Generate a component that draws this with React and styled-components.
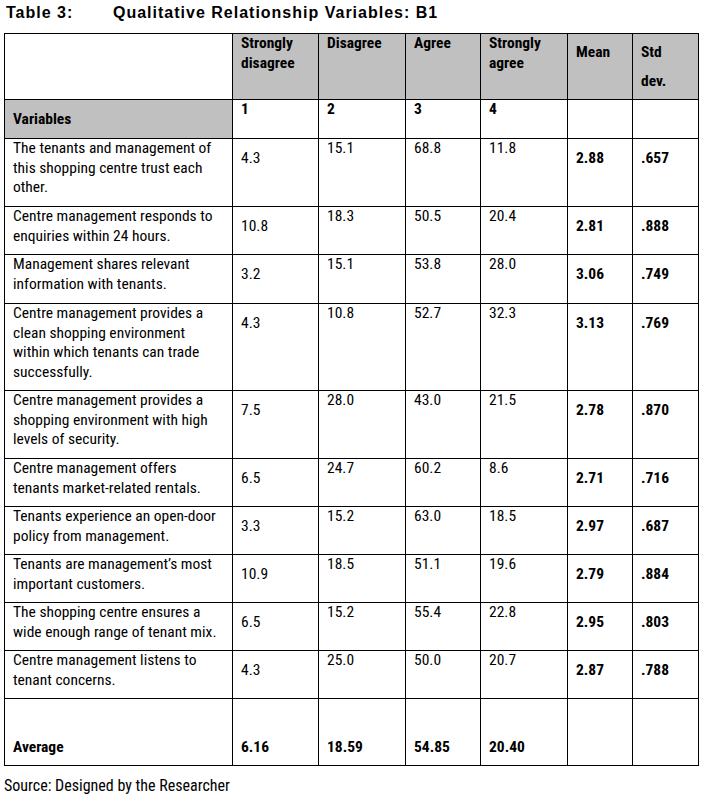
import React from 'react';
import styled, { createGlobalStyle } from 'styled-components';

const GlobalStyle = createGlobalStyle`
  body {
    margin: 0;
    background: #fff;
    color: #000;
    font-family: "Roboto Condensed", "Liberation Sans Narrow", "Arial Narrow", sans-serif;
  }
`;

const Page = styled.div`
  width: 708px;
  height: 799px;
  padding: 3px 0 0 4px;
  box-sizing: border-box;
`;

const Caption = styled.div`
  display: flex;
  font-family: "Liberation Sans", Arial, sans-serif;
  font-weight: bold;
  font-size: 16px;
  line-height: 20px;
  letter-spacing: 1px;
  color: #000;
  padding-left: 2px;
  height: 30px;
`;

const CaptionLabel = styled.span`
  width: 107px;
`;

const Table = styled.table`
  border-collapse: collapse;
  table-layout: fixed;
  width: 695px;
  font-size: 15.5px;
  line-height: 19.5px;
`;

const Tr = styled.tr`
  height: ${p => p.$h}px;
`;

const Cell = styled.td`
  border: 1px solid #000;
  vertical-align: ${p => (p.$bottom ? 'bottom' : 'top')};
  padding: ${p => p.$pt || 0}px 8px ${p => (p.$bottom ? 8 : 0)}px 8px;
  background: ${p => (p.$shade ? '#c0c0c0' : '#fff')};
  font-weight: ${p => (p.$bold ? 'bold' : 'normal')};
  color: #000;
`;

const HeadLines = styled.div`
  line-height: ${p => p.$lh || 19.5}px;
`;

const Source = styled.div`
  margin-top: 10px;
  font-size: 16px;
  line-height: 19px;
  color: #000;
`;

const rows = [
  [['The tenants and management of', 'this shopping centre trust each', 'other.'], '4.3', '15.1', '68.8', '11.8', '2.88', '.657', 68],
  [['Centre management responds to', 'enquiries within 24 hours.'], '10.8', '18.3', '50.5', '20.4', '2.81', '.888', 48],
  [['Management shares relevant', 'information with tenants.'], '3.2', '15.1', '53.8', '28.0', '3.06', '.749', 49],
  [['Centre management provides a', 'clean shopping environment', 'within which tenants can trade', 'successfully.'], '4.3', '10.8', '52.7', '32.3', '3.13', '.769', 87],
  [['Centre management provides a', 'shopping environment with high', 'levels of security.'], '7.5', '28.0', '43.0', '21.5', '2.78', '.870', 68],
  [['Centre management offers', 'tenants market-related rentals.'], '6.5', '24.7', '60.2', '8.6', '2.71', '.716', 48],
  [['Tenants experience an open-door', 'policy from management.'], '3.3', '15.2', '63.0', '18.5', '2.97', '.687', 48],
  [['Tenants are management’s most', 'important customers.'], '10.9', '18.5', '51.1', '19.6', '2.79', '.884', 48],
  [['The shopping centre ensures a', 'wide enough range of tenant mix.'], '6.5', '15.2', '55.4', '22.8', '2.95', '.803', 48],
  [['Centre management listens to', 'tenant concerns.'], '4.3', '25.0', '50.0', '20.7', '2.87', '.788', 48],
];

const Lines = ({ lines }) =>
  lines.map((l, i) => (
    <React.Fragment key={i}>
      {i > 0 && <br />}
      {l}
    </React.Fragment>
  ));

export default function App() {
  return (
    <Page>
      <GlobalStyle />
      <Caption>
        <CaptionLabel>Table 3:</CaptionLabel>
        <span>Qualitative Relationship Variables: B1</span>
      </Caption>
      <Table>
        <colgroup>
          <col style={{ width: 228 }} />
          <col style={{ width: 86 }} />
          <col style={{ width: 87 }} />
          <col style={{ width: 75 }} />
          <col style={{ width: 87 }} />
          <col style={{ width: 65 }} />
          <col style={{ width: 66 }} />
        </colgroup>
        <tbody>
          <Tr $h={66}>
            <Cell />
            <Cell $shade $bold><Lines lines={['Strongly', 'disagree']} /></Cell>
            <Cell $shade $bold>Disagree</Cell>
            <Cell $shade $bold>Agree</Cell>
            <Cell $shade $bold><Lines lines={['Strongly', 'agree']} /></Cell>
            <Cell $shade $bold $pt={9}>Mean</Cell>
            <Cell $shade $bold $pt={4}><HeadLines $lh={29}>Std<br />dev.</HeadLines></Cell>
          </Tr>
          <Tr $h={39}>
            <Cell $shade $bold $pt={10}>Variables</Cell>
            <Cell $bold>1</Cell>
            <Cell $bold>2</Cell>
            <Cell $bold>3</Cell>
            <Cell $bold>4</Cell>
            <Cell />
            <Cell />
          </Tr>
          {rows.map(([lines, sd, d, a, sa, mean, std, h], i) => (
            <Tr key={i} $h={h}>
              <Cell><Lines lines={lines} /></Cell>
              <Cell $pt={10}>{sd}</Cell>
              <Cell>{d}</Cell>
              <Cell>{a}</Cell>
              <Cell>{sa}</Cell>
              <Cell $bold $pt={10}>{mean}</Cell>
              <Cell $bold $pt={10}>{std}</Cell>
            </Tr>
          ))}
          <Tr $h={67}>
            <Cell $bold $bottom>Average</Cell>
            <Cell $bold $bottom>6.16</Cell>
            <Cell $bold $bottom>18.59</Cell>
            <Cell $bold $bottom>54.85</Cell>
            <Cell $bold $bottom>20.40</Cell>
            <Cell />
            <Cell />
          </Tr>
        </tbody>
      </Table>
      <Source>Source: Designed by the Researcher</Source>
    </Page>
  );
}
